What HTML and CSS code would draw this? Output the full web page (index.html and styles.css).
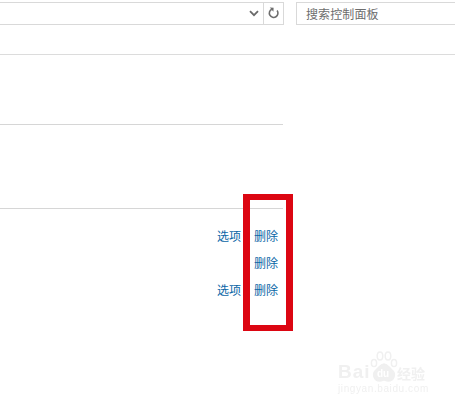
FILE: index.html
```html
<!DOCTYPE html>
<html lang="zh-CN">
<head>
<meta charset="utf-8">
<title>控制面板</title>
<link rel="stylesheet" href="styles.css">
</head>
<body>
<header class="toolbar">
  <div class="address">
    <div class="address-field">
      <svg class="chevron" width="10" height="7" viewBox="0 0 10 7"><path d="M1 1.2 5 5.2 9 1.2" fill="none" stroke="#6a6a6a" stroke-width="1.8"/></svg>
    </div>
    <div class="refresh">
      <svg width="12" height="13" viewBox="0 0 12 13"><path d="M3.2 2.6A4.3 4.3 0 1 0 8.6 3.2" fill="none" stroke="#6d6d6d" stroke-width="1.6" transform="rotate(8 6 7)"/><path d="M1.8 0.6 5.6 0.8 5.4 4.8Z" fill="#6d6d6d"/></svg>
    </div>
  </div>
  <div class="search">搜索控制面板</div>
</header>
<div class="rule-full"></div>
<main class="content">
  <div class="section-top"></div>
  <div class="section-mid"></div>
  <ul class="rows">
    <li class="row"><a class="link">选项</a><a class="link">删除</a></li>
    <li class="row"><a class="link">删除</a></li>
    <li class="row"><a class="link">选项</a><a class="link">删除</a></li>
  </ul>
</main>
<div class="highlight"></div>
<div class="watermark">
  <svg class="paw" width="30" height="34" viewBox="0 0 30 34" fill="none" stroke="#f0f0f0" stroke-width="1.5">
    <ellipse cx="5" cy="12" rx="2.6" ry="3.6"/>
    <ellipse cx="11" cy="5" rx="2.8" ry="4"/>
    <ellipse cx="19" cy="5" rx="2.8" ry="4"/>
    <ellipse cx="25" cy="12" rx="2.6" ry="3.6"/>
    <path d="M15 13c4 0 5 4 8 6 4 3 3 11-4 11-2 0-3-1-4-1s-2 1-4 1c-7 0-8-8-4-11 3-2 4-6 8-6Z" fill="#f0f0f0"/>
  </svg>
  <span class="wm-bai">Bai</span>
  <span class="wm-du">du</span>
  <span class="wm-jy">经验</span>
  <span class="wm-url">jingyan.baidu.com</span>
</div>
</body>
</html>
```
FILE: styles.css
```css
* { box-sizing: border-box; }
html, body { margin: 0; padding: 0; }
body {
  width: 455px;
  height: 405px;
  overflow: hidden;
  position: relative;
  background: #fff;
  font-family: "Noto Sans CJK SC", "Liberation Sans", sans-serif;
  font-size: 12px;
}
.toolbar {
  display: flex;
  gap: 12px;
  padding-top: 2px;
}
.address {
  display: flex;
  width: 284px;
  height: 23px;
  border: 1px solid #d9d9d9;
  border-left: 0;
}
.address-field {
  flex: 1;
  display: flex;
  align-items: center;
  justify-content: flex-end;
  padding-right: 4px;
}
.refresh {
  width: 20px;
  display: flex;
  align-items: center;
  justify-content: center;
  border-left: 1px solid #d9d9d9;
}
.search {
  flex: 1;
  height: 23px;
  padding-left: 9px;
  border: 1px solid #d9d9d9;
  border-right: 0;
  color: #6d6d6d;
  font-size: 12px;
  line-height: 21px;
  letter-spacing: 0.1px;
}
.rule-full {
  margin-top: 29px;
  height: 1px;
  background: #dcdcdc;
}
.content { width: 283px; }
.section-top {
  height: 70px;
  border-bottom: 1px solid #d6d6d6;
}
.section-mid {
  height: 84px;
  border-bottom: 1px solid #d6d6d6;
}
.rows {
  list-style: none;
  margin: 0;
  padding: 13px 5px 0 0;
}
.row {
  display: flex;
  justify-content: flex-end;
  gap: 13px;
  height: 27px;
  line-height: 27px;
}
.link {
  color: #0a66a6;
  font-size: 12px;
}
.highlight {
  position: absolute;
  left: 243px;
  top: 194px;
  width: 50px;
  height: 137px;
  border-style: solid;
  border-color: #dc0612;
  border-width: 6px 7px;
}
.watermark {
  position: absolute;
  left: 338px;
  top: 350px;
  width: 117px;
  height: 52px;
  color: #f0f0f0;
  filter: blur(0.4px);
}
.paw { position: absolute; left: 31px; top: 1px; }
.wm-bai {
  position: absolute;
  left: 0;
  top: 11px;
  font: bold 19px/22px "Liberation Sans", sans-serif;
  letter-spacing: 1px;
}
.wm-du {
  position: absolute;
  left: 39px;
  top: 18px;
  color: #fff;
  font: bold 10px/12px "Liberation Sans", sans-serif;
}
.wm-jy {
  position: absolute;
  left: 59px;
  top: 13px;
  font-size: 14px;
  line-height: 20px;
  font-weight: 700;
}
.wm-url {
  position: absolute;
  left: 0;
  top: 33px;
  font: 10px/12px "Liberation Sans", sans-serif;
  letter-spacing: 0.6px;
}
```
